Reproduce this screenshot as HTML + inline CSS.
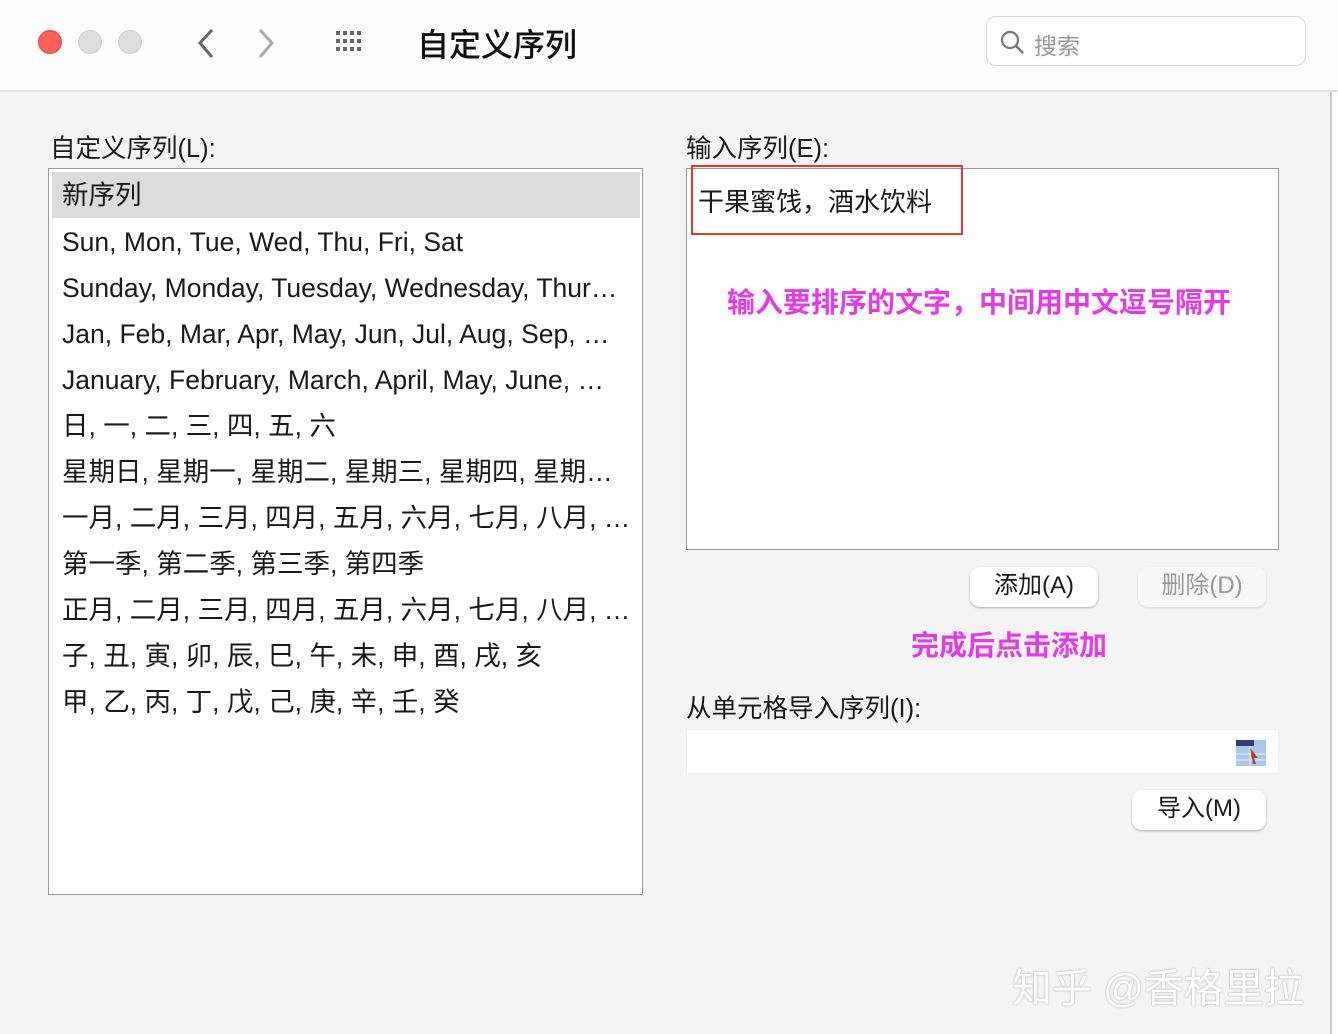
<!DOCTYPE html>
<html><head><meta charset="utf-8"><style>
*{margin:0;padding:0;box-sizing:border-box}
body{width:1338px;height:1034px;background:#f4f4f4;font-family:"Liberation Sans","Noto Sans CJK SC",sans-serif;position:relative;overflow:hidden;color:#1a1a1a}
.a{position:absolute}
.top{left:0;top:0;width:1338px;height:92px;background:#fcfcfc;border-bottom:2px solid #e2e2e2}
.dot{width:24px;height:24px;border-radius:50%;top:30px}
.list{left:48px;top:168px;width:595px;height:727px;background:#fff;border:1px solid #9a9a9a}
.list div{height:46px;line-height:42px;padding-left:13px;font-size:26.5px;white-space:nowrap;overflow:hidden;width:580px}
.lbl{font-size:25.5px}
.btn{background:#fff;border-radius:10px;box-shadow:0 1px 2px rgba(0,0,0,.3);font-size:24px;text-align:center;line-height:38px;height:40px}
.pink{color:#e63ae6;font-weight:bold;font-size:28px}
</style></head><body>
<div class="a top"></div>
<div class="a dot" style="left:38px;background:#fe5f57;border:1px solid #e0443e"></div>
<div class="a dot" style="left:78px;background:#dedede;border:1px solid #cfcfcf"></div>
<div class="a dot" style="left:118px;background:#dedede;border:1px solid #cfcfcf"></div>
<svg class="a" style="left:192px;top:26px" width="90" height="36"><path d="M20 4 L8 17 L20 31" fill="none" stroke="#666" stroke-width="3"/><path d="M68 4 L80 17 L68 31" fill="none" stroke="#aaa" stroke-width="3"/></svg>
<svg class="a" style="left:336px;top:31px" width="32" height="24"><g fill="#666"><rect x="0" y="0" width="4" height="4"/><rect x="7" y="0" width="4" height="4"/><rect x="14" y="0" width="4" height="4"/><rect x="21" y="0" width="4" height="4"/><rect x="0" y="8" width="4" height="4"/><rect x="7" y="8" width="4" height="4"/><rect x="14" y="8" width="4" height="4"/><rect x="21" y="8" width="4" height="4"/><rect x="0" y="16" width="4" height="4"/><rect x="7" y="16" width="4" height="4"/><rect x="14" y="16" width="4" height="4"/><rect x="21" y="16" width="4" height="4"/></g></svg>
<div class="a" style="left:417px;top:20px;font-size:32px;font-weight:500;color:#111">自定义序列</div>
<div class="a" style="left:986px;top:16px;width:320px;height:50px;border:1px solid #d6d6d6;border-radius:10px;background:#fff"></div>
<svg class="a" style="left:1000px;top:30px" width="26" height="26"><circle cx="10" cy="10" r="8" fill="none" stroke="#777" stroke-width="2.2"/><path d="M16 16 L23 23" stroke="#777" stroke-width="2.5"/></svg>
<div class="a" style="left:1034px;top:27px;font-size:23px;color:#999">搜索</div>
<div class="a" style="left:1330px;top:92px;width:8px;height:942px;background:#fff;border-left:2px solid #ccc"></div>
<div class="a lbl" style="left:50px;top:128px">自定义序列(L):</div>
<div class="a list">
<div style="background:#dcdcdc;margin:3px;width:588px;padding-left:10px;line-height:46px">新序列</div>
<div>Sun, Mon, Tue, Wed, Thu, Fri, Sat</div>
<div>Sunday, Monday, Tuesday, Wednesday, Thur…</div>
<div>Jan, Feb, Mar, Apr, May, Jun, Jul, Aug, Sep, …</div>
<div>January, February, March, April, May, June, …</div>
<div>日, 一, 二, 三, 四, 五, 六</div>
<div>星期日, 星期一, 星期二, 星期三, 星期四, 星期…</div>
<div>一月, 二月, 三月, 四月, 五月, 六月, 七月, 八月, …</div>
<div>第一季, 第二季, 第三季, 第四季</div>
<div>正月, 二月, 三月, 四月, 五月, 六月, 七月, 八月, …</div>
<div>子, 丑, 寅, 卯, 辰, 巳, 午, 未, 申, 酉, 戌, 亥</div>
<div>甲, 乙, 丙, 丁, 戊, 己, 庚, 辛, 壬, 癸</div>
</div>
<div class="a lbl" style="left:686px;top:128px">输入序列(E):</div>
<div class="a" style="left:686px;top:168px;width:593px;height:382px;background:#fff;border:1px solid #9a9a9a"></div>
<div class="a" style="left:691px;top:165px;width:272px;height:70px;border:2px solid #e53a2a"></div>
<div class="a" style="left:698px;top:182px;font-size:26px">干果蜜饯，酒水饮料</div>
<div class="a pink" style="left:727px;top:281px">输入要排序的文字，中间用中文逗号隔开</div>
<div class="a btn" style="left:970px;top:567px;width:128px">添加(A)</div>
<div class="a btn" style="left:1138px;top:567px;width:128px;color:#999;box-shadow:0 1px 2px rgba(0,0,0,.12);background:#f8f8f8">删除(D)</div>
<div class="a pink" style="left:911px;top:624px">完成后点击添加</div>
<div class="a lbl" style="left:686px;top:688px">从单元格导入序列(I):</div>
<div class="a" style="left:686px;top:729px;width:593px;height:45px;background:#fff;border:1px solid #eee"></div>
<svg class="a" style="left:1236px;top:740px" width="30" height="26"><rect width="30" height="26" fill="#a8c8ee"/><rect width="18" height="6" fill="#3a3a7a"/><path d="M0 14H30M0 20H30M14 6V26" stroke="#e6eefa"/><path d="M14 8 L22 18 L18 18 L20 24 L17 24" fill="#c0392b"/></svg>
<div class="a btn" style="left:1132px;top:790px;width:134px">导入(M)</div>
<div class="a" style="left:1012px;top:956px;font-size:40px;color:#fff;text-shadow:0 0 2px #bbb,0 0 1px #999">知乎 @香格里拉</div>
</body></html>
